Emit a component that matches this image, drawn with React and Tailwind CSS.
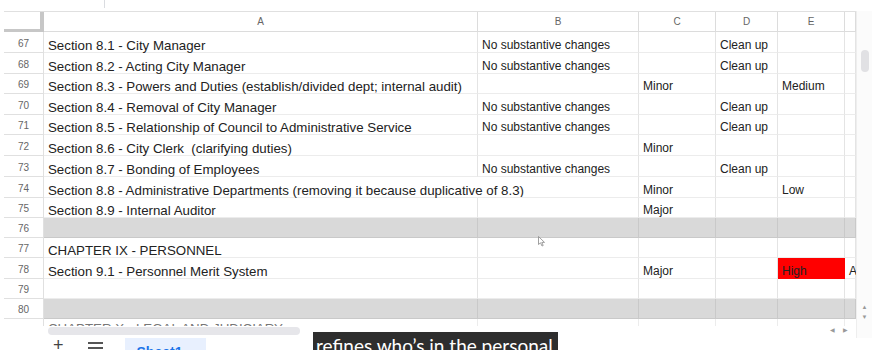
import React from "react";

const rows = [
  { n: 67, h: 21, a: "Section 8.1 - City Manager", b: "No substantive changes", d: "Clean up" },
  { n: 68, h: 21, a: "Section 8.2 - Acting City Manager", b: "No substantive changes", d: "Clean up" },
  { n: 69, h: 20, a: "Section 8.3 - Powers and Duties (establish/divided dept; internal audit)", c: "Minor", e: "Medium" },
  { n: 70, h: 21, a: "Section 8.4 - Removal of City Manager", b: "No substantive changes", d: "Clean up" },
  { n: 71, h: 20, a: "Section 8.5 - Relationship of Council to Administrative Service", b: "No substantive changes", d: "Clean up" },
  { n: 72, h: 21, a: "Section 8.6 - City Clerk  (clarifying duties)", c: "Minor" },
  { n: 73, h: 21, a: "Section 8.7 - Bonding of Employees", b: "No substantive changes", d: "Clean up" },
  { n: 74, h: 21, a: "Section 8.8 - Administrative Departments (removing it because duplicative of 8.3)", c: "Minor", e: "Low", spill: true },
  { n: 75, h: 20, a: "Section 8.9 - Internal Auditor", c: "Major" },
  { n: 76, h: 20, gray: true },
  { n: 77, h: 20, a: "CHAPTER IX - PERSONNEL" },
  { n: 78, h: 21, a: "Section 9.1 - Personnel Merit System", c: "Major", e: "High", red: true, f: "A" },
  { n: 79, h: 20 },
  { n: 80, h: 20, gray: true },
];

const cols = [
  { key: "a", label: "A", w: "w-[434px]" },
  { key: "b", label: "B", w: "w-[161px]" },
  { key: "c", label: "C", w: "w-[77px]" },
  { key: "d", label: "D", w: "w-[62px]" },
  { key: "e", label: "E", w: "w-[67px]" },
  { key: "f", label: "", w: "w-[11px]" },
];

function Cell({ row, col }) {
  const text = row[col.key];
  const size = col.key === "a" ? "text-[13.3px]" : "text-[12px]";
  let cls = `${col.w} ${size} shrink-0 flex items-end pl-[4px] border-b whitespace-pre leading-[13px] text-[#222]`;
  if (row.gray) {
    cls += " bg-[#d9d9d9] border-[#c9c9c9] border-r";
  } else if (row.red && col.key === "e") {
    cls += " bg-[#ff0000] border-[#ff0000] border-r text-[#9e0000]";
  } else {
    cls += " border-[#ececec]";
    if (!(row.spill && col.key === "a")) cls += " border-r border-r-[#e4e4e4]";
  }
  return <div className={cls}>{text}</div>;
}

export default function App() {
  return (
    <div className="w-[882px] h-[350px] overflow-hidden bg-white relative font-['Liberation_Sans',Arial,sans-serif]">
      {/* formula bar, cut off at the top */}
      <div className="h-[11px] flex items-start overflow-hidden text-[13px] text-[#444]">
        <span className="ml-[17px] -mt-[12px] leading-[14px]">A74:A76</span>
        <span className="ml-[22px] -mt-[13px] text-[10px] text-[#777]">▾</span>
        <div className="ml-[10px] w-px h-[8px] bg-[#dadce0]" />
        <span className="ml-[9px] -mt-[12px] leading-[14px] italic text-[#888]">fx</span>
      </div>

      <div className="flex">
        {/* grid */}
        <div className="ml-[4px] w-[852px] overflow-hidden">
          {/* column header */}
          <div className="flex h-[21px] border-t border-[#e0e0e0]">
            <div className="w-[40px] shrink-0 border-r-[4px] border-b-[3px] border-[#c7c7c7]" />
            {cols.map((c) => (
              <div
                key={c.key}
                className={`${c.w} shrink-0 flex items-center justify-center border-r border-b border-[#dcdcdc] text-[10px] text-[#666]`}
              >
                {c.label}
              </div>
            ))}
          </div>

          {rows.map((r) => (
            <div key={r.n} className={`flex ${r.h === 21 ? "h-[21px]" : "h-[20px]"}`}>
              <div className="w-[40px] shrink-0 flex items-end justify-center pb-[2px] border-r border-b border-[#e0e0e0] text-[10px] leading-[12px] text-[#666]">
                {r.n}
              </div>
              {cols.map((c) => (
                <Cell key={c.key} row={r} col={c} />
              ))}
            </div>
          ))}

          {/* partial row 81 */}
          <div className="flex h-[7px] overflow-hidden">
            <div className="w-[40px] shrink-0 border-r border-[#e0e0e0]" />
            <div className="w-[434px] shrink-0 pl-[4px] pt-[3px] text-[13.3px] leading-[13px] text-[#777] whitespace-nowrap border-r border-[#ececec]">
              CHAPTER X - LEGAL AND JUDICIARY
            </div>
            <div className="w-[161px] shrink-0 border-r border-[#ececec]" />
            <div className="w-[77px] shrink-0 border-r border-[#ececec]" />
            <div className="w-[62px] shrink-0 border-r border-[#ececec]" />
            <div className="w-[67px] shrink-0 border-r border-[#ececec]" />
          </div>

          {/* horizontal scrollbar */}
          <div className="flex h-[12px] items-start">
            <div className="w-[44px] shrink-0" />
            <div className="w-[252px] h-[8px] mt-[1px] rounded-full bg-[#e6e6ea]" />
            <div className="flex-1" />
            <div className="flex items-center gap-[8px] h-[9px] pr-[8px] text-[6px] text-[#999]">
              <span>◀</span>
              <span>▶</span>
            </div>
          </div>
        </div>

        {/* vertical scrollbar */}
        <div className="w-[16px] shrink-0 border-l border-[#eeeeee] bg-[#fbfbfb] flex flex-col items-center pt-[39px] pb-[16px] h-[327px]">
          <div className="w-[8px] h-[22px] rounded-full bg-[#e1e1e4]" />
          <div className="flex-1" />
          <span className="text-[6px] leading-[10px] text-[#999]">▲</span>
          <span className="text-[6px] leading-[10px] text-[#999]">▼</span>
        </div>
      </div>

      {/* sheet tab bar */}
      <div className="flex items-start h-[12px] overflow-hidden">
        <span className="ml-[53px] -mt-[3px] text-[18px] leading-[20px] text-[#444]">+</span>
        <div className="ml-[24px] mt-[4px] flex flex-col gap-[3px]">
          <div className="w-[15px] h-[2px] bg-[#555]" />
          <div className="w-[15px] h-[2px] bg-[#555]" />
        </div>
        <div className="ml-[22px] w-[81px] h-[14px] bg-[#e8f0fe] pl-[12px] pt-[6px] text-[14px] leading-[16px] font-bold text-[#1a73e8]">
          Sheet1
        </div>
      </div>

      {/* mouse cursor */}
      <svg className="absolute left-[538px] top-[236px]" width="8" height="11" viewBox="0 0 8 11">
        <path d="M0.5 0.5 L0.5 8.5 L2.5 6.8 L4 10 L5.2 9.5 L3.8 6.4 L6.5 6.4 Z" fill="#fff" stroke="#888" strokeWidth="0.8" />
      </svg>

      {/* video caption */}
      <div className="absolute left-[313px] top-[332px] w-[245px] h-[24px] bg-[#2e2e2e] pl-[3px] pt-[2px] text-[19px] leading-[24px] text-white whitespace-nowrap font-['Lato',sans-serif]">
        refines who’s in the personal
      </div>
    </div>
  );
}
